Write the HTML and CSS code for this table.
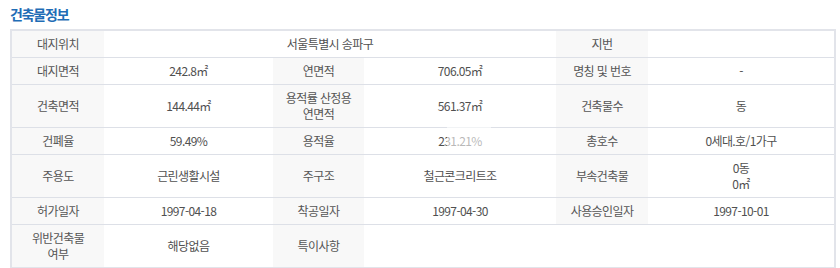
FILE: index.html
```html
<!DOCTYPE html>
<html lang="ko">
<head>
<meta charset="utf-8">
<link rel="stylesheet" href="styles.css">
</head>
<body>
<div class="page">
  <h2 class="title">건축물정보</h2>
  <div class="table-wrap">
    <table class="info">
      <colgroup>
        <col class="c1"><col class="c2"><col class="c3"><col class="c4"><col class="c5"><col class="c6">
      </colgroup>
      <tr>
        <th>대지위치</th>
        <td colspan="3">서울특별시 송파구</td>
        <th>지번</th>
        <td></td>
      </tr>
      <tr>
        <th>대지면적</th>
        <td>242.8㎡</td>
        <th>연면적</th>
        <td>706.05㎡</td>
        <th>명칭 및 번호</th>
        <td>-</td>
      </tr>
      <tr>
        <th>건축면적</th>
        <td>144.44㎡</td>
        <th>용적률 산정용<br>연면적</th>
        <td>561.37㎡</td>
        <th>건축물수</th>
        <td>동</td>
      </tr>
      <tr>
        <th>건폐율</th>
        <td>59.49%</td>
        <th>용적율</th>
        <td>231.21%</td>
        <th>총호수</th>
        <td>0세대.호/1가구</td>
      </tr>
      <tr>
        <th>주용도</th>
        <td>근린생활시설</td>
        <th>주구조</th>
        <td>철근콘크리트조</td>
        <th>부속건축물</th>
        <td>0동<br>0㎡</td>
      </tr>
      <tr>
        <th>허가일자</th>
        <td>1997-04-18</td>
        <th>착공일자</th>
        <td>1997-04-30</td>
        <th>사용승인일자</th>
        <td>1997-10-01</td>
      </tr>
      <tr>
        <th>위반건축물<br>여부</th>
        <td>해당없음</td>
        <th>특이사항</th>
        <td colspan="3"></td>
      </tr>
    </table>
    <div class="veil"></div>
    <div class="veil-line"></div>
  </div>
</div>
</body>
</html>
```

FILE: styles.css
```css
html, body {
  margin: 0;
  padding: 0;
  background: #ffffff;
}
.page {
  padding: 4px 6px 0 10px;
  font-family: "Noto Sans CJK KR", "Noto Sans", sans-serif;
}
.title {
  margin: 0;
  height: 25px;
  line-height: 20px;
  font-size: 14px;
  font-weight: 700;
  color: #1f6db6;
  letter-spacing: -1.2px;
}
.table-wrap {
  position: relative;
}
.info {
  width: 824px;
  table-layout: fixed;
  border-collapse: collapse;
  border: 2px solid #e2e4ea;
  font-size: 12px;
  color: #555;
  letter-spacing: -0.6px;
}
.c1 { width: 93px; }
.c2 { width: 169px; }
.c3 { width: 91px; }
.c4 { width: 192px; }
.c5 { width: 92px; }
.c6 { width: 187px; }
.info th, .info td {
  padding: 5px 4px 5px;
  line-height: 16px;
  text-align: center;
  border-bottom: 1px solid #dde0e7;
  font-weight: 400;
  vertical-align: middle;
}
.info th {
  background: #f8f8f8;
  color: #555;
}
.info td {
  background: #ffffff;
  color: #505050;
}
.veil {
  position: absolute;
  left: 437px;
  top: 98px;
  width: 44px;
  height: 26px;
  background: rgba(255, 255, 255, 0.6);
}
.veil-line {
  position: absolute;
  left: 356px;
  top: 95px;
  width: 100px;
  height: 3px;
  background: rgba(255, 255, 255, 0.6);
}
```
